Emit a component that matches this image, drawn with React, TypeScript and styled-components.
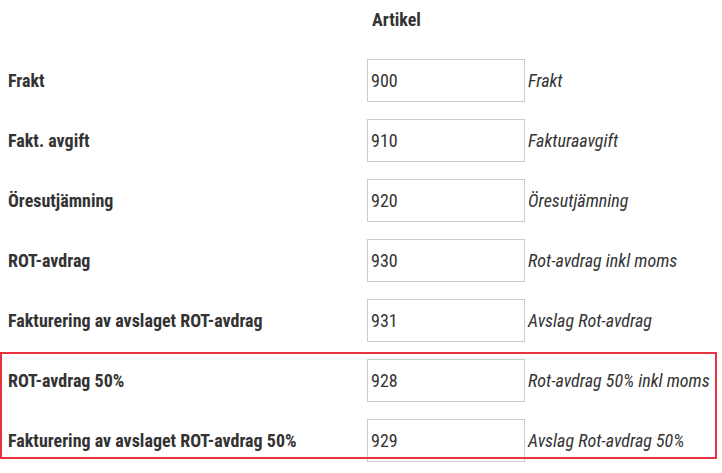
import styled, { createGlobalStyle } from "styled-components";

const GlobalStyle = createGlobalStyle`
  body {
    margin: 0;
    background: #fff;
    font-family: Roboto, "Liberation Sans", sans-serif;
    font-stretch: condensed;
    color: #333;
  }
`;

const Page = styled.div`
  padding: 8px;
`;

const Table = styled.div`
  display: flex;
  flex-direction: column;
`;

const Row = styled.div`
  display: grid;
  grid-template-columns: 359px 158px 1fr;
  align-items: center;
  height: 60px;
`;

const HeaderRow = styled(Row)`
  height: 23px;
  margin-bottom: 19px;
`;

const HeaderCell = styled.div`
  font-weight: 700;
  font-size: 18px;
  padding-left: 5px;
`;

const Label = styled.div`
  font-weight: 700;
  font-size: 18px;
  white-space: nowrap;
`;

const ArticleInput = styled.input`
  box-sizing: border-box;
  width: 158px;
  height: 43px;
  border: 1px solid #ccc;
  padding: 0 3px;
  font-family: inherit;
  font-stretch: condensed;
  font-size: 18px;
  color: #333;
  background: #fff;
  outline: none;
`;

const Description = styled.div`
  font-style: italic;
  font-size: 18px;
  padding-left: 3px;
  white-space: nowrap;
`;

const Highlight = styled.div`
  position: relative;
`;

/* annotation frame drawn over the last two rows */
const HighlightFrame = styled.div`
  position: absolute;
  box-sizing: border-box;
  top: 2px;
  left: -8px;
  width: calc(100% + 11px);
  height: 107px;
  border: 2px solid #e8343f;
  pointer-events: none;
`;

type Article = { label: string; code: string; text: string };

const articles: Article[] = [
  { label: "Frakt", code: "900", text: "Frakt" },
  { label: "Fakt. avgift", code: "910", text: "Fakturaavgift" },
  { label: "Öresutjämning", code: "920", text: "Öresutjämning" },
  { label: "ROT-avdrag", code: "930", text: "Rot-avdrag inkl moms" },
  {
    label: "Fakturering av avslaget ROT-avdrag",
    code: "931",
    text: "Avslag Rot-avdrag",
  },
];

const highlighted: Article[] = [
  { label: "ROT-avdrag 50%", code: "928", text: "Rot-avdrag 50% inkl moms" },
  {
    label: "Fakturering av avslaget ROT-avdrag 50%",
    code: "929",
    text: "Avslag Rot-avdrag 50%",
  },
];

const ArticleRow = ({ item }: { item: Article }) => (
  <Row>
    <Label>{item.label}</Label>
    <ArticleInput defaultValue={item.code} />
    <Description>{item.text}</Description>
  </Row>
);

export default function App() {
  return (
    <Page>
      <GlobalStyle />
      <Table>
        <HeaderRow>
          <div />
          <HeaderCell>Artikel</HeaderCell>
          <div />
        </HeaderRow>
        {articles.map((a) => (
          <ArticleRow key={a.code} item={a} />
        ))}
        <Highlight>
          {highlighted.map((a) => (
            <ArticleRow key={a.code} item={a} />
          ))}
          <HighlightFrame />
        </Highlight>
      </Table>
    </Page>
  );
}
